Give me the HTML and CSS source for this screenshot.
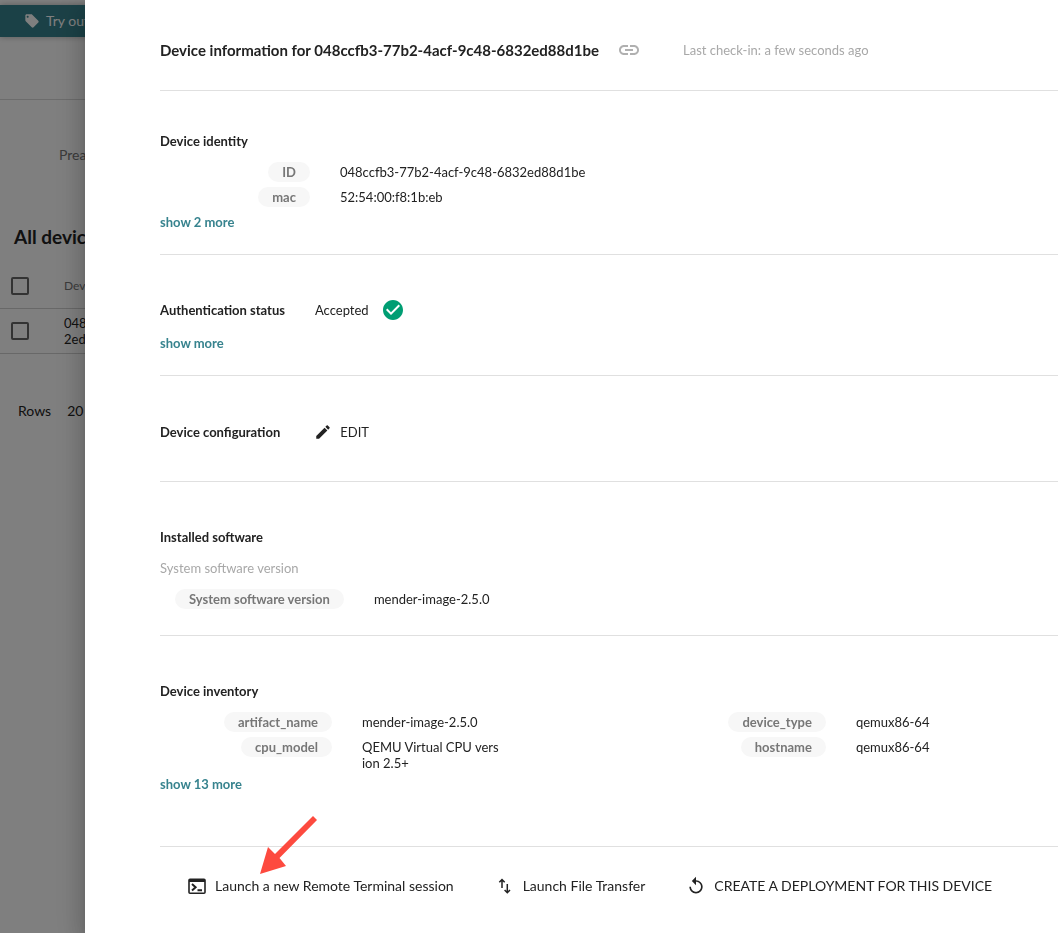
FILE: index.html
```html
<!DOCTYPE html>
<html lang="en">
<head>
<meta charset="utf-8">
<title>Device information</title>
<link rel="stylesheet" href="styles.css">
</head>
<body>
<div class="page">
  <div class="banner">
    <svg class="banner-icon" viewBox="0 0 24 24"><path d="M21.41 11.58l-9-9C12.05 2.22 11.55 2 11 2H4c-1.1 0-2 .9-2 2v7c0 .55.22 1.05.59 1.42l9 9c.36.36.86.58 1.41.58s1.05-.22 1.41-.59l7-7c.37-.36.59-.86.59-1.41s-.23-1.06-.59-1.42zM5.5 7C4.67 7 4 6.33 4 5.5S4.67 4 5.5 4 7 4.67 7 5.5 6.33 7 5.5 7z"/></svg>
    <span>Try out</span>
  </div>
  <header class="page-header"></header>
  <main>
    <p class="tab">Prea</p>
    <h1 class="page-title">All devic</h1>
    <table class="devices">
      <thead>
        <tr><th class="check-cell"><input type="checkbox" class="check" aria-label="Select all devices"></th><th>Dev</th></tr>
      </thead>
      <tbody>
        <tr><td class="check-cell"><input type="checkbox" class="check" aria-label="Select device"></td><td>048<br>2ed</td></tr>
      </tbody>
    </table>
    <div class="rows"><span>Rows</span><span>20</span></div>
  </main>
</div>
<div class="backdrop"></div>
<aside class="drawer">
  <header class="drawer-header">
    <h2 class="drawer-title">Device information for 048ccfb3-77b2-4acf-9c48-6832ed88d1be</h2>
    <button class="link-button" aria-label="Copy link"><svg class="icon-large" viewBox="0 0 24 24"><path d="M3.900 12c0-1.710 1.390-3.100 3.100-3.100h4V7H7c-2.760 0-5 2.240-5 5s2.240 5 5 5h4v-1.900H7c-1.710 0-3.100-1.390-3.100-3.100zM8 13h8v-2H8v2zm9-6h-4v1.900h4c1.710 0 3.100 1.390 3.100 3.100s-1.390 3.100-3.100 3.100h-4V17h4c2.760 0 5-2.240 5-5s-2.240-5-5-5z"/></svg></button>
    <span class="muted">Last check-in: a few seconds ago</span>
  </header>

  <section class="section identity">
    <h3>Device identity</h3>
    <dl class="attributes">
      <dt><span class="pill">ID</span></dt><dd>048ccfb3-77b2-4acf-9c48-6832ed88d1be</dd>
      <dt><span class="pill">mac</span></dt><dd>52:54:00:f8:1b:eb</dd>
    </dl>
    <a class="more" href="#">show 2 more</a>
  </section>

  <section class="section auth">
    <div class="title-row">
      <h3>Authentication status</h3>
      <span class="status">Accepted
        <svg class="icon-large accepted" viewBox="0 0 24 24"><path d="M12 2C6.480 2 2 6.480 2 12s4.480 10 10 10 10-4.480 10-10S17.520 2 12 2zm-2 15l-5-5 1.410-1.410L10 14.170l7.590-7.590L19 8l-9 9z"/></svg>
      </span>
    </div>
    <a class="more" href="#">show more</a>
  </section>

  <section class="section configuration">
    <div class="title-row">
      <h3>Device configuration</h3>
      <button class="edit"><svg class="icon-small" viewBox="0 0 24 24"><path d="M3 17.250V21h3.750L17.810 9.940l-3.750-3.750L3 17.250zM20.710 7.040c.39-.39.39-1.020 0-1.410l-2.340-2.340c-.39-.39-1.020-.39-1.410 0l-1.830 1.830 3.750 3.750 1.830-1.830z"/></svg>EDIT</button>
    </div>
  </section>

  <section class="section software">
    <h3>Installed software</h3>
    <p class="subtitle muted">System software version</p>
    <dl class="attributes fit">
      <dt><span class="pill">System software version</span></dt><dd>mender-image-2.5.0</dd>
    </dl>
  </section>

  <section class="section inventory">
    <h3>Device inventory</h3>
    <div class="inventory-columns">
      <dl class="attributes wide">
        <dt><span class="pill">artifact_name</span></dt><dd>mender-image-2.5.0</dd>
        <dt><span class="pill">cpu_model</span></dt><dd>QEMU Virtual CPU version 2.5+</dd>
      </dl>
      <dl class="attributes wide">
        <dt><span class="pill">device_type</span></dt><dd>qemux86-64</dd>
        <dt><span class="pill">hostname</span></dt><dd>qemux86-64</dd>
      </dl>
    </div>
    <a class="more" href="#">show 13 more</a>
  </section>

  <footer class="actions">
    <button class="action terminal">
      <svg class="icon" viewBox="0 0 20 20"><path fill-rule="evenodd" d="M3 2.500h14a1.800 1.800 0 0 1 1.800 1.800v11.900a1.800 1.800 0 0 1-1.800 1.800H3a1.800 1.800 0 0 1-1.800-1.800V4.300A1.800 1.800 0 0 1 3 2.500zM2.800 6v10.400h14.400V6z"/><path class="stroke" d="M5 8l3.600 3.200L5 14.400M10.500 14.300h4.500"/></svg>
      Launch a new Remote Terminal session
      <svg class="pointer" viewBox="0 0 60 60"><path d="M55 1l4 4-37.500 38 6.500 8L2 59l8-27 7 7z"/></svg>
    </button>
    <button class="action transfer">
      <svg class="icon" viewBox="0 0 20 20"><path class="stroke" d="M7 12V4M4.300 6.300L7 3.600l2.700 2.700M12.300 8v8M9.600 14l2.700 2.700L15 14"/></svg>
      Launch File Transfer
    </button>
    <button class="action">
      <svg class="icon" viewBox="0 0 24 24"><path d="M12 5V1L7 6l5 5V7c3.310 0 6 2.690 6 6s-2.690 6-6 6-6-2.690-6-6H4c0 4.420 3.580 8 8 8s8-3.580 8-8-3.580-8-8-8z"/></svg>
      CREATE A DEPLOYMENT FOR THIS DEVICE
    </button>
  </footer>
</aside>
</body>
</html>
```
FILE: styles.css
```css
* {
  box-sizing: border-box;
}

body {
  margin: 0;
  font: 13px/20px Lato, "Open Sans", sans-serif;
  color: #222;
  background: #fff;
  min-height: 100vh;
  overflow: hidden;
}

h1, h2, h3, p, dl, dd {
  margin: 0;
}

button {
  font: inherit;
  color: inherit;
  background: none;
  border: 0;
  padding: 0;
  cursor: pointer;
}

svg {
  fill: currentColor;
  flex: none;
}

/* Device list behind the drawer */
.page {
  padding-top: 5px;
}

.banner {
  display: flex;
  align-items: center;
  gap: 6px;
  height: 32px;
  padding-left: 24px;
  background: #37838e;
  color: #fff;
  font-size: 14px;
  box-shadow: 0 0 6px rgba(0, 0, 0, .3);
}

.banner-icon {
  width: 16px;
  height: 16px;
}

.page-header {
  height: 63px;
  border-bottom: 1px solid #d8d8d8;
}

.tab {
  padding: 45px 0 0 59px;
  font-size: 14px;
  color: #777;
}

.page-title {
  padding: 60px 0 0 14px;
  font-size: 19px;
  line-height: 24px;
}

.devices {
  width: 100%;
  margin-top: 14px;
  border-collapse: collapse;
  text-align: left;
  line-height: 16px;
}

.devices th,
.devices td {
  height: 45px;
  padding: 0;
  border-bottom: 1px solid #d0d0d0;
}

.devices th {
  padding-top: 2px;
  font-size: 12px;
  font-weight: 400;
  color: #777;
}

.devices .check-cell {
  width: 64px;
  padding-left: 11px;
}

.check {
  appearance: none;
  display: block;
  width: 18px;
  height: 18px;
  margin: 0;
  border: 2px solid #666;
  border-radius: 2px;
}

.rows {
  display: flex;
  gap: 16px;
  padding: 47px 0 0 18px;
  font-size: 14px;
}

.backdrop {
  position: fixed;
  inset: 0;
  background: rgba(0, 0, 0, .5);
}

/* Drawer */
.drawer {
  position: fixed;
  inset: 0 0 0 85px;
  padding-left: 75px;
  overflow: hidden;
  background: #fff;
  box-shadow: 0 8px 10px -5px rgba(0, 0, 0, .2), 0 16px 24px 2px rgba(0, 0, 0, .14), 0 6px 30px 5px rgba(0, 0, 0, .12);
}

.drawer-header {
  display: flex;
  align-items: center;
  padding: 38px 0 28px;
}

.drawer-title {
  font-size: 15px;
}

.link-button {
  display: flex;
  margin: 0 42px 0 18px;
  color: #b0b0b0;
}

.muted {
  color: #a8a8a8;
}

.icon-large {
  width: 24px;
  height: 24px;
}

.icon {
  width: 20px;
  height: 20px;
}

.icon-small {
  width: 18px;
  height: 18px;
}

.section {
  border-top: 1px solid #e0e0e0;
  padding: 45px 0 22px;
}

.identity {
  padding-top: 40px;
}

.configuration {
  padding: 46px 0 39px;
}

.software {
  padding-bottom: 26px;
}

.inventory {
  padding-bottom: 52px;
}

h3 {
  font-size: 13px;
}

.title-row {
  display: flex;
  align-items: center;
  gap: 30px;
  height: 20px;
}

.status {
  display: flex;
  align-items: center;
  gap: 12px;
}

.accepted {
  color: #009e73;
}

.edit {
  display: flex;
  align-items: center;
  gap: 8px;
  margin-left: 4px;
}

.attributes {
  display: grid;
  grid-template-columns: 150px 1fr;
  align-content: start;
  gap: 5px 30px;
  margin-top: 11px;
}

.attributes.fit {
  grid-template-columns: auto 1fr;
  padding-left: 15px;
}

.attributes.wide {
  grid-template-columns: 172px 138px;
  margin-top: 0;
}

.attributes dt {
  text-align: right;
}

.attributes dd {
  padding-top: 2px;
  line-height: 16px;
  word-break: break-all;
}

.pill {
  display: inline-block;
  padding: 0 14px;
  border-radius: 10px;
  background: #f7f7f7;
  color: #777;
  font-weight: 700;
}

.subtitle {
  margin-top: 11px;
}

.inventory-columns {
  display: grid;
  grid-template-columns: 55% 45%;
  margin-top: 11px;
}

.more {
  display: block;
  width: fit-content;
  margin-top: 5px;
  color: #37838e;
  font-weight: 700;
  text-decoration: none;
}

.title-row + .more {
  margin-top: 13px;
}

.inventory .more {
  margin-top: 3px;
}

.actions {
  display: flex;
  gap: 41px;
  padding: 29px 0 0 27px;
  border-top: 1px solid #e0e0e0;
  font-size: 14px;
}

.action {
  position: relative;
  display: flex;
  align-items: center;
  gap: 8px;
  white-space: nowrap;
}

.stroke {
  fill: none;
  stroke: currentColor;
  stroke-width: 2;
}

.transfer .stroke {
  stroke-width: 1.5;
}

/* Annotation arrow over the first action */
.pointer {
  position: absolute;
  left: 71px;
  bottom: 21px;
  width: 60px;
  height: 60px;
  color: #fd4a3f;
}
```
